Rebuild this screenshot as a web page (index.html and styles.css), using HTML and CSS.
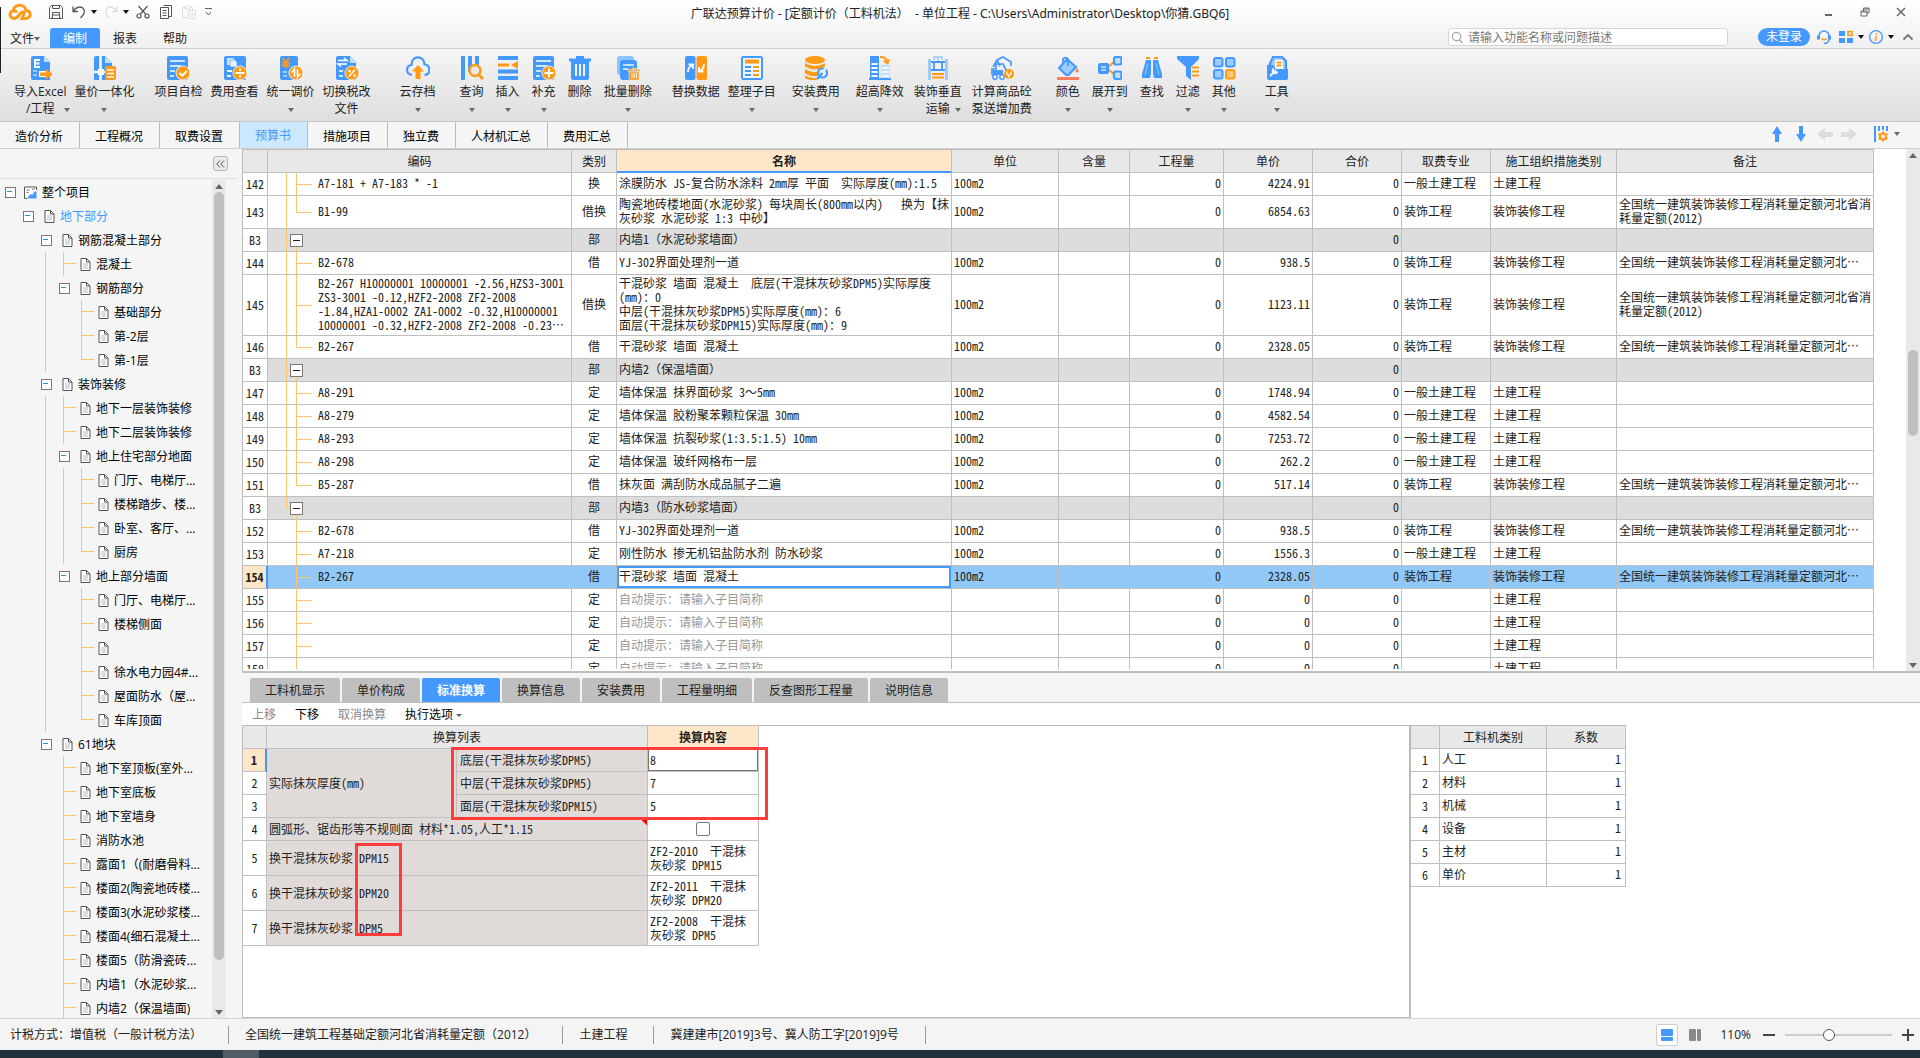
FILE: index.html
```html
<!DOCTYPE html>
<html lang="zh-CN">
<head>
<meta charset="utf-8">
<title>广联达预算计价</title>
<link rel="stylesheet" href="styles.css">
</head>
<body>
<svg class="defs" aria-hidden="true">
  <symbol id="doc" viewBox="0 0 11 13"><path d="M1 .5h5.500L10 4v8.500H1z" fill="#fff" stroke="#555"/><path d="M6.500.5V4H10" fill="none" stroke="#555"/><path d="M3 6h5M3 8h5M3 10h5" stroke="#bbb"/></symbol>
</svg>
<div class="app">
<header class="top">
  <div class="titlebar">
    <div class="quick">
      <svg class="logo" viewBox="0 0 24 18"><path d="M8 8.500C6 7 3 8 2.200 10.500 1.500 13 3.500 15.500 6.500 15.500 9.500 15.500 11 11 13.500 9.500 15 8.600 16.500 9.500 16 11L14 15.500H17.500C21 15.500 23 12.500 21.800 9.800 21 8 19.500 7.500 18 7.500 17.500 4 14.500 1.800 11 2.200 7.500 2.600 5.500 5 5.500 7.500" fill="none" stroke="#ff9a16" stroke-width="3" stroke-linecap="round"/></svg>
      <button aria-label="保存"><svg viewBox="0 0 14 14"><path d="M.5 2.500l2-2h9l2 2v11H.5zM3.500.5v3h7v-3M3.500 13V7.500h7V13M3.500 10h7" fill="none" stroke="#555"/></svg></button>
      <button aria-label="撤销"><svg viewBox="0 0 14 14"><path d="M1 1.500v5h5M1.500 6C4 1.500 10 .5 12 4.500c1.500 3.500-1 6-3.500 8.500" fill="none" stroke="#555" stroke-width="1.300"/></svg></button>
      <i class="caret"></i>
      <button aria-label="恢复"><svg viewBox="0 0 14 14"><path d="M13 1.500v5H8M12.500 6C10 1.500 4 .5 2 4.500c-1.500 3.500 1 6 3.500 8.500" fill="none" stroke="#ddd" stroke-width="1.300"/></svg></button>
      <i class="caret"></i>
      <button aria-label="剪切"><svg viewBox="0 0 14 14"><g fill="none" stroke="#555" stroke-width="1.200"><path d="M2.500 1l7.500 8.500M11.500 1L4 9.500"/><circle cx="3" cy="11" r="2"/><circle cx="11" cy="11" r="2"/></g></svg></button>
      <button aria-label="复制"><svg viewBox="0 0 14 14"><path d="M4.500.5h8v11h-3M1.500 2.500h8v11h-8zM3.500 5.500h4M3.500 8h4M3.500 10.500h4" fill="none" stroke="#555"/></svg></button>
      <button aria-label="粘贴"><svg viewBox="0 0 14 14"><path d="M5 12.500H.5v-10H3M8 2.500h2.500V5M3 1h5v3H3zM6.500 5.500h7v8h-7zM8 8.500h4M8 11h4" fill="none" stroke="#ddd"/></svg></button>
      <svg class="more" viewBox="0 0 8 9"><path d="M0 .5h7M1 4l2.500 3L6 4" fill="none" stroke="#666"/></svg>
    </div>
    <h1>广联达预算计价 - [定额计价（工料机法）  - 单位工程 - C:\Users\Administrator\Desktop\你猜.GBQ6]</h1>
    <div class="winbtns">
      <button aria-label="最小化"><svg viewBox="0 0 10 10"><path d="M1 8h7" stroke="#666" stroke-width="2"/></svg></button>
      <button aria-label="还原"><svg viewBox="0 0 10 10"><path d="M1 4h6v5H1zM1 5h6M3.500 4V1H9v5H7M3.500 2H9" fill="none" stroke="#666"/></svg></button>
      <button aria-label="关闭"><svg viewBox="0 0 10 10"><path d="M1 1l8 8M9 1L1 9" stroke="#666" stroke-width="1.500"/></svg></button>
    </div>
  </div>
  <div class="menubar">
    <nav class="menus"><button class="file">文件<i class="caret grey"></i></button><button class="on">编制</button><button>报表</button><button>帮助</button></nav>
    <div class="account">
      <label class="search"><svg viewBox="0 0 14 14"><circle cx="6" cy="6" r="4.500" fill="none" stroke="#aaa" stroke-width="1.400"/><path d="M9 9.500l3.500 3.500" stroke="#aaa" stroke-width="1.600"/></svg><input type="text" placeholder="请输入功能名称或问题描述" aria-label="搜索"></label>
      <button class="login">未登录</button>
      <svg class="a16" viewBox="0 0 16 16"><path d="M3 9V7a5 5 0 0 1 10 0v3c0 2.500-2 4.500-5 4.500" fill="none" stroke="#49f" stroke-width="1.600"/><path d="M2.500 6.500v4M13.500 6.500v4" stroke="#49f" stroke-width="3"/><path d="M5.500 9.500q2.500 2.500 5 0" stroke="#ff9a16" stroke-width="1.600" fill="none"/></svg>
      <svg class="a16" viewBox="0 0 16 16"><path d="M1 2h6v5H1zM1 9h6v5H1zM9 9h6v5H9z" fill="#49f"/><path d="M10 2.500h4v4h-4z" fill="none" stroke="#ff9a16" stroke-width="1.600"/></svg>
      <i class="caret"></i>
      <svg class="a16" viewBox="0 0 16 16"><circle cx="8" cy="8" r="6.400" fill="none" stroke="#49f" stroke-width="1.300"/><path d="M8.800 4.200l-.3 1.500M8.200 7L7.300 12" stroke="#ff9a16" stroke-width="1.600"/></svg>
      <i class="caret"></i>
      <svg class="a12" viewBox="0 0 12 12"><path d="M1.500 8.500L6 4l4.500 4.500" fill="none" stroke="#777" stroke-width="1.800"/></svg>
    </div>
  </div>
</header>

<div class="ribbon">
  <div class="group">
    <button><svg viewBox="0 0 24 24"><path d="M3 2a2 2 0 0 1 2-2h11l6 6v18H5a2 2 0 0 1-2-2z" fill="#49f"/><path d="M16 0l6 6h-6z" fill="#bfe0ff"/><path d="M12 4H7v7h5M7 7.500h4.500" stroke="#fff" stroke-width="2" fill="none"/><path d="M5 15h4M5 19h4" stroke="#9cf" stroke-width="2"/><path d="M11 18h7" stroke="#fff" stroke-width="6"/><path d="M12 16.500h6V13l7 5.300-7 5.300V20h-6z" fill="#ff9a16"/></svg><span>导入Excel<br>/工程<i class="caret grey gap"></i></span></button>
    <button><svg viewBox="0 0 24 24"><path d="M2 2a2 2 0 0 1 2-2h9l7 7v17H2z" fill="#49f"/><path d="M13 0l7 7h-7z" fill="#bfe0ff"/><path d="M8.500 0v24M2 16h12" stroke="#fff" stroke-width="2.500"/><path d="M6 13h6v6H6z" fill="#fff"/><rect x="13" y="10" width="11" height="14" rx="2" fill="#ff9a16"/><path d="M15 14h7M15 17.500h7M15 21h7" stroke="#fff" stroke-width="1.500"/></svg><span>量价一体化<br><i class="caret grey"></i></span></button>
  </div>
  <div class="group sm">
    <button><svg viewBox="0 0 24 24"><rect x="1" width="21" height="24" rx="2" fill="#49f"/><path d="M4 5h15M4 10h11M4 15h5M4 20h4" stroke="#cfe6ff" stroke-width="2"/><circle cx="17" cy="17" r="7" fill="#ff9a16" stroke="#eee"/><path d="M13.500 17l2.700 2.700 4.600-4.600" stroke="#fff" stroke-width="2" fill="none"/></svg><span>项目自检</span></button>
    <button><svg viewBox="0 0 24 24"><rect x="1" width="22" height="24" rx="2" fill="#49f"/><path d="M4 2h6l2 2v5H4z" fill="#cfe6ff"/><path d="M7 4h5l2 2v5H7z" fill="#e8f3ff" stroke="#49f" stroke-width=".6"/><path d="M4 15h5M4 20h4" stroke="#fff" stroke-width="2"/><circle cx="17" cy="17" r="7" fill="#ff9a16" stroke="#eee"/><path d="M12.500 17h9M17 12.500v2.500M17 19v2.500" stroke="#fff" stroke-width="2"/></svg><span>费用查看</span></button>
    <button><svg viewBox="0 0 24 24"><rect x="1" width="18" height="24" rx="2" fill="#49f"/><path d="M3.500 2l3.500 4 3.500-4M7 6v6M3 6.500h8M3 9.500h8" stroke="#ff9a16" stroke-width="1.800" fill="none"/><path d="M4 16h4M4 20h4" stroke="#9cf" stroke-width="2"/><circle cx="17" cy="17" r="7" fill="#ff9a16" stroke="#eee"/><path d="M15.500 21v-8l-3 3.500M18.500 13v8l3-3.500" stroke="#fff" stroke-width="1.600" fill="none"/></svg><span>统一调价<br><i class="caret grey"></i></span></button>
    <button><svg viewBox="0 0 24 24"><path d="M1 2a2 2 0 0 1 2-2h12l6 6v18H3a2 2 0 0 1-2-2z" fill="#49f"/><path d="M15 0l7 7h-7z" fill="#bfe0ff"/><path d="M3 4.500h9L9 2M12 8H3l3 2.500" stroke="#fff" stroke-width="1.600" fill="none"/><path d="M4 15h4M4 20h4" stroke="#cfe6ff" stroke-width="2"/><circle cx="17" cy="17" r="7" fill="#ff9a16" stroke="#eee"/><path d="M20 13.500l-6 7" stroke="#fff" stroke-width="1.500"/><circle cx="14.500" cy="15" r="1.300" fill="#fff"/><circle cx="19.500" cy="19.500" r="1.300" fill="#fff"/></svg><span>切换税改<br>文件</span></button>
  </div>
  <div class="group lg">
    <button><svg viewBox="0 0 24 24"><path d="M6 19C-1 18 0 9.500 5.500 9 5.500-1 18-1 18.500 8.500c6 .5 7 9.500 0 10.500" fill="none" stroke="#49f" stroke-width="2.200"/><path d="M12 9l6 6.500h-3.500V23h-5v-7.500H6z" fill="#ff9a16"/></svg><span>云存档<br><i class="caret grey"></i></span></button>
  </div>
  <div class="group md">
    <button><svg viewBox="0 0 24 24"><path d="M1 0h4v24H1zM8 0h4v16H8zM15 0h4v9h-4z" fill="#49f"/><circle cx="15" cy="14.500" r="5.500" fill="#e9e9e9" stroke="#ff9a16" stroke-width="2.400"/><path d="M19 19l4 4" stroke="#ff9a16" stroke-width="2.800"/></svg><span>查询<br><i class="caret grey"></i></span></button>
    <button><svg viewBox="0 0 24 24"><path d="M2 2h20M2 15.500h20M2 22h20" stroke="#49f" stroke-width="4"/><path d="M2 9h11" stroke="#ff9a16" stroke-width="3"/><path d="M22 5v8l-7-4z" fill="#ff9a16"/></svg><span>插入<br><i class="caret grey"></i></span></button>
    <button><svg viewBox="0 0 24 24"><rect x="1" width="21" height="24" rx="2" fill="#49f"/><path d="M4 5h15M4 10h11M4 15h5M4 20h4" stroke="#cfe6ff" stroke-width="2"/><circle cx="17" cy="17" r="7" fill="#ff9a16" stroke="#eee"/><path d="M12.500 17h9M17 12.500v9" stroke="#fff" stroke-width="2"/></svg><span>补充<br><i class="caret grey"></i></span></button>
    <button><svg viewBox="0 0 24 24"><path d="M1 2.500h22v3H1zM8 0h8v3H8zM3 5h18v17a2 2 0 0 1-2 2H5a2 2 0 0 1-2-2z" fill="#49f"/><path d="M8 8v12M12 8v12M16 8v12" stroke="#fff" stroke-width="1.800"/></svg><span>删除</span></button>
    <button><svg viewBox="0 0 24 24"><rect x="1" width="17" height="19" rx="3" fill="#8cc4ff"/><rect x="4" y="4" width="17" height="20" rx="3" fill="#49f"/><path d="M7 9h11M7 13h5" stroke="#bfe0ff" stroke-width="2"/><path d="M12 13.500h12v2H12zM16 12h4v2h-4zM13 16h10v8H13z" fill="#ff9a16" stroke="#eee" stroke-width=".5"/><path d="M16 17v5M18.200 17v5M20.400 17v5" stroke="#fff"/></svg><span>批量删除<br><i class="caret grey"></i></span></button>
  </div>
  <div class="group sm">
    <button><svg viewBox="0 0 24 24"><rect x="1" width="10.500" height="24" rx="2" fill="#49f"/><rect x="12.500" width="10.500" height="24" rx="2" fill="#ff9a16"/><path d="M4 16q0-5 4-6.500M4.500 8.500h4.500v4.500M20 8q0 5-4 6.500M19.500 15.500H15V11" stroke="#fff" stroke-width="1.800" fill="none"/></svg><span>替换数据</span></button>
    <button><svg viewBox="0 0 24 24"><rect x="2" y="1" width="20" height="22" rx="1.500" fill="#eef6ff" stroke="#49f" stroke-width="2"/><path d="M5 5.500h14" stroke="#ff9a16" stroke-width="4"/><path d="M5 11h6M5 15h6M5 19h6" stroke="#49f" stroke-width="1.800"/><path d="M13 11h6M13 15h6M13 19h6" stroke="#ff9a16" stroke-width="1.800"/></svg><span>整理子目<br><i class="caret grey"></i></span></button>
  </div>
  <div class="group xs">
    <button><svg viewBox="0 0 24 24"><ellipse cx="11" cy="4" rx="10" ry="4" fill="#ff9a16"/><path d="M1 7q10 6 20 0v3.500q-10 6-20 0zM1 13q8 5 14 2l-2 5q-6 1-12-2.500zM1 19.500q6 3 11 2.500l1 2q-7 1-12-2z" fill="#ff9a16"/><circle cx="18.500" cy="17" r="4.500" fill="#e6f2ff" stroke="#49f" stroke-width="2.200"/><path d="M18.500 17L13 23" stroke="#49f" stroke-width="2.500"/><path d="M18.500 16.500l3-4" stroke="#eee" stroke-width="2.500"/></svg><span>安装费用<br><i class="caret grey"></i></span></button>
  </div>
  <div class="group xs">
    <button><svg viewBox="0 0 24 24"><path d="M2 0h9v22H2zM1 22h22v2H1z" fill="#49f"/><path d="M3.500 8h6M3.500 12h6M3.500 16h6M3.500 20h6" stroke="#fff" stroke-width="1.800"/><path d="M13 9h9v13h-9z" fill="#bfe0ff"/><path d="M14 12h7M14 16h7M14 20h7" stroke="#fff" stroke-width="1.600"/><path d="M12 1q6 0 7 4" stroke="#ff9a16" stroke-width="2.200" fill="none"/><path d="M14.500 5l7.500-2-2 6z" fill="#ff9a16"/></svg><span>超高降效<br><i class="caret grey"></i></span></button>
    <button><svg viewBox="0 0 24 24"><path d="M2 3h3v21H2zM19 3h3v21h-3z" fill="#9bcbff"/><path d="M5 6h14M5 14h14M8 7v7M16 7v7" stroke="#49f" stroke-width="1.800"/><path d="M8 4V1h8v3M12 1v4" stroke="#9bcbff" fill="none" stroke-width="1.500"/><path d="M6 18h12M6 21.500h12" stroke="#ff9a16" stroke-width="2.200"/></svg><span>装饰垂直<br>运输<i class="caret grey near"></i></span></button>
    <button><svg viewBox="0 0 24 24"><path d="M3 11l4-7 6-3 8 5v4M7 4l3 6M2 19v-6h4V8h7l3 6v3" fill="none" stroke="#49f" stroke-width="1.700"/><path d="M3 14h10v5H2z" fill="#49f"/><circle cx="5" cy="21" r="2.200" fill="#fff" stroke="#49f" stroke-width="1.500"/><circle cx="12" cy="21" r="2.200" fill="#fff" stroke="#49f" stroke-width="1.500"/><circle cx="19" cy="18" r="5" fill="#ff9a16"/><path d="M17 15.500v2.500l2 1.500 2-1.500v-2.500M19 19v3" stroke="#fff" stroke-width="1.200" fill="none"/></svg><span>计算商品砼<br>泵送增加费</span></button>
  </div>
  <div class="group md">
    <button><svg viewBox="0 0 24 24"><path d="M11 3l9 8-7.500 8H10l-7-7z" fill="#9bcbff" stroke="#49f" stroke-width="2"/><path d="M7 8V3a3 3 0 0 1 5 0v7" fill="none" stroke="#49f" stroke-width="1.800"/><path d="M21 12q3 4 0 4.500-3-.5 0-4.500z" fill="#f97c5d"/><path d="M1 22.500h22" stroke="#f97c5d" stroke-width="3"/></svg><span>颜色<br><i class="caret grey"></i></span></button>
    <button><svg viewBox="0 0 24 24"><path d="M10 11l7-6M10 13l7 6" stroke="#ff9a16" stroke-width="1.800"/><rect x="0" y="7" width="11" height="11" rx="2" fill="#49f"/><path d="M3 11h5M3 14h5" stroke="#cfe6ff" stroke-width="1.500"/><rect x="16" y="1" width="7.500" height="7.500" rx="2" fill="#bfe0ff" stroke="#49f" stroke-width="2.200"/><rect x="16" y="15.500" width="7.500" height="7.500" rx="2" fill="#bfe0ff" stroke="#49f" stroke-width="2.200"/></svg><span>展开到<br><i class="caret grey"></i></span></button>
    <button><svg viewBox="0 0 24 24"><path d="M6 4h5v13l-1 5H2V18zM13 4h5l4 14v4h-8l-1-5z" fill="#49f"/><path d="M6 2h4M14 2h4" stroke="#ff9a16" stroke-width="2"/><path d="M8 7L5 19M16 7l3 12" stroke="#9bcbff"/></svg><span>查找</span></button>
    <button><svg viewBox="0 0 24 24"><path d="M1 0h22v3l-8 8v13l-5-4v-9L1 3z" fill="#49f"/><path d="M16 11.500h7M16 15.500h7M16 19.500h7" stroke="#ff9a16" stroke-width="2"/></svg><span>过滤<br><i class="caret grey"></i></span></button>
    <button><svg viewBox="0 0 24 24"><g fill="#9bcbff" stroke="#49f" stroke-width="2"><rect x="2" y="2" width="8.500" height="8.500" rx="2"/><rect x="14" y="2" width="8.500" height="8.500" rx="2"/><rect x="2" y="14" width="8.500" height="8.500" rx="2"/><rect x="14" y="14" width="8.500" height="8.500" rx="2" fill="#ffc77a" stroke="#ff9a16"/></g></svg><span>其他<br><i class="caret grey"></i></span></button>
  </div>
  <div class="group lg">
    <button><svg viewBox="0 0 24 24"><path d="M4 10l4-9h9l4 4v8" fill="#9bcbff" stroke="#49f" stroke-width="2.200"/><path d="M10 4h8v10h-8z" fill="#fff"/><path d="M11.500 6.500h5M11.500 9.500h5" stroke="#ff9a16" stroke-width="1.800"/><path d="M2 9h6l3 4h12v9a2 2 0 0 1-2 2H4a2 2 0 0 1-2-2z" fill="#49f"/><path d="M5 20l6-6M9 12.500a2.500 2.500 0 1 0 3.500 3" stroke="#fff" stroke-width="1.800" fill="none"/></svg><span>工具<br><i class="caret grey"></i></span></button>
  </div>
</div>

<div class="pages">
  <nav><button>造价分析</button><button>工程概况</button><button>取费设置</button><button class="on">预算书</button><button>措施项目</button><button>独立费</button><button>人材机汇总</button><button>费用汇总</button></nav>
  <div class="moves">
    <svg viewBox="0 0 16 16"><path d="M8 0l5 8h-3v8H6V8H3z" fill="#49f"/></svg>
    <svg viewBox="0 0 16 16"><path d="M8 16l5-8h-3V0H6v8H3z" fill="#49f"/></svg>
    <svg viewBox="0 0 16 16"><path d="M0 8l8-6v4h8v5H8v4z" fill="#ddd"/></svg>
    <svg viewBox="0 0 16 16"><path d="M16 8L8 2v4H0v5h8v4z" fill="#ddd"/></svg>
    <svg class="cols" viewBox="0 0 16 16"><path d="M1 0h2v16H1zM5 0h2v5H5zM9 0h2v4H9zM13 0h2v5h-2z" fill="#49f"/><circle cx="10" cy="10.500" r="3" fill="none" stroke="#ff9a16" stroke-width="2.200"/><path d="M10 5.500v2M10 13.500v2M5.500 8l2 1M12.500 12l2 1M5.500 13l2-1M12.500 9l2-1" stroke="#ff9a16" stroke-width="2"/></svg>
    <i class="caret grey"></i>
  </div>
</div>

<div class="body">
<aside class="side">
  <div class="sidehead"><button aria-label="收起"><svg viewBox="0 0 9 8"><path d="M4 .5L.8 4 4 7.500M8 .5L4.800 4 8 7.500" fill="none" stroke="#555"/></svg></button></div>
  <div class="treebox">
    <ul class="tree">
      <li><i class="tg"></i><svg class="root" viewBox="0 0 13 13"><path d="M12.500 4V1H.5v11.500H3" fill="#fff" stroke="#555"/><path d="M3 12.500V9l3-1 2-3h4.500v7.500z" fill="#fff"/><path d="M3 12.500l3-4h3l1-3h2.500v7z" fill="#49f"/><path d="M2.500 4h3M2.500 6.500h2M8 3.500l3-1" stroke="#777"/></svg>整个项目</li>
      <li class="cur"><i></i><i class="tg"></i><svg><use href="#doc"/></svg>地下部分</li>
      <li><i></i><i></i><i class="tg"></i><svg><use href="#doc"/></svg>钢筋混凝土部分</li>
      <li><i></i><i></i><i class="v"></i><i class="v h"></i><svg><use href="#doc"/></svg>混凝土</li>
      <li><i></i><i></i><i class="v"></i><i class="tg"></i><svg><use href="#doc"/></svg>钢筋部分</li>
      <li><i></i><i></i><i class="v"></i><i></i><i class="v h"></i><svg><use href="#doc"/></svg>基础部分</li>
      <li><i></i><i></i><i class="v"></i><i></i><i class="v h"></i><svg><use href="#doc"/></svg>第-2层</li>
      <li><i></i><i></i><i class="v"></i><i></i><i class="e h"></i><svg><use href="#doc"/></svg>第-1层</li>
      <li><i></i><i></i><i class="tg"></i><svg><use href="#doc"/></svg>装饰装修</li>
      <li><i></i><i></i><i class="v"></i><i class="v h"></i><svg><use href="#doc"/></svg>地下一层装饰装修</li>
      <li><i></i><i></i><i class="v"></i><i class="v h"></i><svg><use href="#doc"/></svg>地下二层装饰装修</li>
      <li><i></i><i></i><i class="v"></i><i class="tg"></i><svg><use href="#doc"/></svg>地上住宅部分地面</li>
      <li><i></i><i></i><i class="v"></i><i class="v"></i><i class="v h"></i><svg><use href="#doc"/></svg>门厅、电梯厅...</li>
      <li><i></i><i></i><i class="v"></i><i class="v"></i><i class="v h"></i><svg><use href="#doc"/></svg>楼梯踏步、楼...</li>
      <li><i></i><i></i><i class="v"></i><i class="v"></i><i class="v h"></i><svg><use href="#doc"/></svg>卧室、客厅、...</li>
      <li><i></i><i></i><i class="v"></i><i class="v"></i><i class="e h"></i><svg><use href="#doc"/></svg>厨房</li>
      <li><i></i><i></i><i class="v"></i><i class="tg"></i><svg><use href="#doc"/></svg>地上部分墙面</li>
      <li><i></i><i></i><i class="v"></i><i></i><i class="v h"></i><svg><use href="#doc"/></svg>门厅、电梯厅...</li>
      <li><i></i><i></i><i class="v"></i><i></i><i class="v h"></i><svg><use href="#doc"/></svg>楼梯侧面</li>
      <li><i></i><i></i><i class="v"></i><i></i><i class="v h"></i><svg><use href="#doc"/></svg></li>
      <li><i></i><i></i><i class="v"></i><i></i><i class="v h"></i><svg><use href="#doc"/></svg>徐水电力园4#...</li>
      <li><i></i><i></i><i class="v"></i><i></i><i class="v h"></i><svg><use href="#doc"/></svg>屋面防水（屋...</li>
      <li><i></i><i></i><i class="v"></i><i></i><i class="e h"></i><svg><use href="#doc"/></svg>车库顶面</li>
      <li><i></i><i></i><i class="tg"></i><svg><use href="#doc"/></svg>61地块</li>
      <li><i></i><i></i><i></i><i class="v h"></i><svg><use href="#doc"/></svg>地下室顶板(室外...</li>
      <li><i></i><i></i><i></i><i class="v h"></i><svg><use href="#doc"/></svg>地下室底板</li>
      <li><i></i><i></i><i></i><i class="v h"></i><svg><use href="#doc"/></svg>地下室墙身</li>
      <li><i></i><i></i><i></i><i class="v h"></i><svg><use href="#doc"/></svg>消防水池</li>
      <li><i></i><i></i><i></i><i class="v h"></i><svg><use href="#doc"/></svg>露面1（(耐磨骨料...</li>
      <li><i></i><i></i><i></i><i class="v h"></i><svg><use href="#doc"/></svg>楼面2(陶瓷地砖楼...</li>
      <li><i></i><i></i><i></i><i class="v h"></i><svg><use href="#doc"/></svg>楼面3(水泥砂浆楼...</li>
      <li><i></i><i></i><i></i><i class="v h"></i><svg><use href="#doc"/></svg>楼面4(细石混凝土...</li>
      <li><i></i><i></i><i></i><i class="v h"></i><svg><use href="#doc"/></svg>楼面5（防滑瓷砖...</li>
      <li><i></i><i></i><i></i><i class="v h"></i><svg><use href="#doc"/></svg>内墙1（水泥砂浆...</li>
      <li><i></i><i></i><i></i><i class="v h"></i><svg><use href="#doc"/></svg>内墙2（保温墙面)</li>
    </ul>
    <div class="vbar"><i class="up"></i><div class="track side-track"><b></b></div><i class="down"></i></div>
  </div>
</aside>

<main class="work">
<section class="upper">
  <div class="gridbox">
  <table class="grid main">
    <colgroup><col class="w-no"><col class="w-code"><col class="w-kind"><col class="w-name"><col class="w-unit"><col class="w-cont"><col class="w-qty"><col class="w-price"><col class="w-price"><col class="w-price"><col class="w-cat"><col class="w-note"></colgroup>
    <thead><tr><th></th><th>编码</th><th>类别</th><th class="hot">名称</th><th>单位</th><th>含量</th><th>工程量</th><th>单价</th><th>合价</th><th>取费专业</th><th>施工组织措施类别</th><th>备注</th></tr></thead>
    <tbody>
      <tr><th>142</th><td class="code o t">A7-181 + A7-183 * -1</td><td class="c">换</td><td>涂膜防水 JS-复合防水涂料 2mm厚 平面  实际厚度(mm):1.5</td><td>100m2</td><td></td><td class="r">0</td><td class="r">4224.91</td><td class="r">0</td><td>一般土建工程</td><td>土建工程</td><td></td></tr>
      <tr><th>143</th><td class="code o l">B1-99</td><td class="c">借换</td><td>陶瓷地砖楼地面(水泥砂浆) 每块周长(800mm以内)   换为【抹<br>灰砂浆 水泥砂浆 1:3 中砂】</td><td>100m2</td><td></td><td class="r">0</td><td class="r">6854.63</td><td class="r">0</td><td>装饰工程</td><td>装饰装修工程</td><td>全国统一建筑装饰装修工程消耗量定额河北省消<br>耗量定额(2012)</td></tr>
      <tr class="sec"><th>B3</th><td class="code o s"><button class="fold" aria-label="折叠"></button></td><td class="c">部</td><td>内墙1<span class="fw">（水泥砂浆墙面）</span></td><td></td><td></td><td></td><td></td><td class="r">0</td><td></td><td></td><td></td></tr>
      <tr><th>144</th><td class="code o t">B2-678</td><td class="c">借</td><td>YJ-302界面处理剂一道</td><td>100m2</td><td></td><td class="r">0</td><td class="r">938.5</td><td class="r">0</td><td>装饰工程</td><td>装饰装修工程</td><td>全国统一建筑装饰装修工程消耗量定额河北…</td></tr>
      <tr><th>145</th><td class="code o t">B2-267 H10000001 10000001 -2.56,HZS3-3001<br>ZS3-3001 -0.12,HZF2-2008 ZF2-2008<br>-1.84,HZA1-0002 ZA1-0002 -0.32,H10000001<br>10000001 -0.32,HZF2-2008 ZF2-2008 -0.23…</td><td class="c">借换</td><td>干混砂浆 墙面 混凝土  底层(干混抹灰砂浆DPM5)实际厚度<br>(mm)：0<br>中层(干混抹灰砂浆DPM5)实际厚度(mm)：6<br>面层(干混抹灰砂浆DPM15)实际厚度(mm)：9</td><td>100m2</td><td></td><td class="r">0</td><td class="r">1123.11</td><td class="r">0</td><td>装饰工程</td><td>装饰装修工程</td><td>全国统一建筑装饰装修工程消耗量定额河北省消<br>耗量定额(2012)</td></tr>
      <tr><th>146</th><td class="code o l">B2-267</td><td class="c">借</td><td>干混砂浆 墙面 混凝土</td><td>100m2</td><td></td><td class="r">0</td><td class="r">2328.05</td><td class="r">0</td><td>装饰工程</td><td>装饰装修工程</td><td>全国统一建筑装饰装修工程消耗量定额河北…</td></tr>
      <tr class="sec"><th>B3</th><td class="code o s"><button class="fold" aria-label="折叠"></button></td><td class="c">部</td><td>内墙2<span class="fw">（保温墙面）</span></td><td></td><td></td><td></td><td></td><td class="r">0</td><td></td><td></td><td></td></tr>
      <tr><th>147</th><td class="code o t">A8-291</td><td class="c">定</td><td>墙体保温 抹界面砂浆 3<span class="fw">～</span>5mm</td><td>100m2</td><td></td><td class="r">0</td><td class="r">1748.94</td><td class="r">0</td><td>一般土建工程</td><td>土建工程</td><td></td></tr>
      <tr><th>148</th><td class="code o t">A8-279</td><td class="c">定</td><td>墙体保温 胶粉聚苯颗粒保温 30mm</td><td>100m2</td><td></td><td class="r">0</td><td class="r">4582.54</td><td class="r">0</td><td>一般土建工程</td><td>土建工程</td><td></td></tr>
      <tr><th>149</th><td class="code o t">A8-293</td><td class="c">定</td><td>墙体保温 抗裂砂浆(1:3.5:1.5) 10mm</td><td>100m2</td><td></td><td class="r">0</td><td class="r">7253.72</td><td class="r">0</td><td>一般土建工程</td><td>土建工程</td><td></td></tr>
      <tr><th>150</th><td class="code o t">A8-298</td><td class="c">定</td><td>墙体保温 玻纤网格布一层</td><td>100m2</td><td></td><td class="r">0</td><td class="r">262.2</td><td class="r">0</td><td>一般土建工程</td><td>土建工程</td><td></td></tr>
      <tr><th>151</th><td class="code o l">B5-287</td><td class="c">借</td><td>抹灰面 满刮防水成品腻子二遍</td><td>100m2</td><td></td><td class="r">0</td><td class="r">517.14</td><td class="r">0</td><td>装饰工程</td><td>装饰装修工程</td><td>全国统一建筑装饰装修工程消耗量定额河北…</td></tr>
      <tr class="sec"><th>B3</th><td class="code oe s"><button class="fold" aria-label="折叠"></button></td><td class="c">部</td><td>内墙3<span class="fw">（防水砂浆墙面）</span></td><td></td><td></td><td></td><td></td><td class="r">0</td><td></td><td></td><td></td></tr>
      <tr><th>152</th><td class="code t">B2-678</td><td class="c">借</td><td>YJ-302界面处理剂一道</td><td>100m2</td><td></td><td class="r">0</td><td class="r">938.5</td><td class="r">0</td><td>装饰工程</td><td>装饰装修工程</td><td>全国统一建筑装饰装修工程消耗量定额河北…</td></tr>
      <tr><th>153</th><td class="code t">A7-218</td><td class="c">定</td><td>刚性防水 掺无机铝盐防水剂 防水砂浆</td><td>100m2</td><td></td><td class="r">0</td><td class="r">1556.3</td><td class="r">0</td><td>一般土建工程</td><td>土建工程</td><td></td></tr>
      <tr class="sel"><th>154</th><td class="code t">B2-267</td><td class="c">借</td><td class="edit">干混砂浆 墙面 混凝土</td><td>100m2</td><td></td><td class="r">0</td><td class="r">2328.05</td><td class="r">0</td><td>装饰工程</td><td>装饰装修工程</td><td>全国统一建筑装饰装修工程消耗量定额河北…</td></tr>
      <tr><th>155</th><td class="code t"></td><td class="c">定</td><td class="hint">自动提示：请输入子目简称</td><td></td><td></td><td class="r">0</td><td class="r">0</td><td class="r">0</td><td></td><td>土建工程</td><td></td></tr>
      <tr><th>156</th><td class="code t"></td><td class="c">定</td><td class="hint">自动提示：请输入子目简称</td><td></td><td></td><td class="r">0</td><td class="r">0</td><td class="r">0</td><td></td><td>土建工程</td><td></td></tr>
      <tr><th>157</th><td class="code t"></td><td class="c">定</td><td class="hint">自动提示：请输入子目简称</td><td></td><td></td><td class="r">0</td><td class="r">0</td><td class="r">0</td><td></td><td>土建工程</td><td></td></tr>
      <tr><th>158</th><td class="code l"></td><td class="c">定</td><td class="hint">自动提示：请输入子目简称</td><td></td><td></td><td class="r">0</td><td class="r">0</td><td class="r">0</td><td></td><td>土建工程</td><td></td></tr>
    </tbody>
  </table>
  </div>
  <div class="vbar"><i class="up"></i><div class="track main-track"><b></b></div><i class="down"></i></div>
</section>

<section class="lower">
  <nav class="tabs"><button>工料机显示</button><button>单价构成</button><button class="on">标准换算</button><button>换算信息</button><button>安装费用</button><button>工程量明细</button><button>反查图形工程量</button><button>说明信息</button></nav>
  <div class="tools"><button disabled>上移</button><button>下移</button><button disabled>取消换算</button><button>执行选项<i class="caret grey"></i></button></div>
  <div class="panes">
    <div class="pane conv">
      <table class="grid">
        <colgroup><col class="w-no2"><col class="w-item"><col class="w-sub"><col class="w-val"></colgroup>
        <thead><tr><th></th><th colspan="2">换算列表</th><th class="hot2">换算内容</th></tr></thead>
        <tbody>
          <tr class="now"><th>1</th><td class="lab" rowspan="3">实际抹灰厚度(mm)</td><td class="lab sub">底层(干混抹灰砂浆DPM5)</td><td class="focus">8</td></tr>
          <tr><th>2</th><td class="lab sub">中层(干混抹灰砂浆DPM5)</td><td>7</td></tr>
          <tr><th>3</th><td class="lab sub">面层(干混抹灰砂浆DPM15)</td><td>5</td></tr>
          <tr><th>4</th><td class="lab flag" colspan="2">圆弧形、锯齿形等不规则面 材料*1.05,人工*1.15</td><td class="c"><input type="checkbox" aria-label="圆弧形、锯齿形等不规则面"></td></tr>
          <tr class="tall"><th>5</th><td class="lab" colspan="2">换干混抹灰砂浆 DPM15</td><td>ZF2-2010  干混抹<br>灰砂浆 DPM15</td></tr>
          <tr class="tall"><th>6</th><td class="lab" colspan="2">换干混抹灰砂浆 DPM20</td><td>ZF2-2011  干混抹<br>灰砂浆 DPM20</td></tr>
          <tr class="tall"><th>7</th><td class="lab" colspan="2">换干混抹灰砂浆 DPM5</td><td>ZF2-2008  干混抹<br>灰砂浆 DPM5</td></tr>
        </tbody>
      </table>
      <div class="mark one"></div>
      <div class="mark two"></div>
    </div>
    <div class="pane coef">
      <table class="grid">
        <colgroup><col class="w-no3"><col class="w-type"><col class="w-coef"></colgroup>
        <thead><tr><th></th><th>工料机类别</th><th>系数</th></tr></thead>
        <tbody>
          <tr><th>1</th><td>人工</td><td class="r">1</td></tr>
          <tr><th>2</th><td>材料</td><td class="r">1</td></tr>
          <tr><th>3</th><td>机械</td><td class="r">1</td></tr>
          <tr><th>4</th><td>设备</td><td class="r">1</td></tr>
          <tr><th>5</th><td>主材</td><td class="r">1</td></tr>
          <tr><th>6</th><td>单价</td><td class="r">1</td></tr>
        </tbody>
      </table>
    </div>
  </div>
</section>
</main>
</div>

<footer class="status">
  <span class="tax">计税方式：增值税（一般计税方法）</span><span class="quota">全国统一建筑工程基础定额河北省消耗量定额（2012）</span><span class="prof">土建工程</span><span class="rule">冀建建市[2019]3号、冀人防工字[2019]9号</span>
  <div class="zoom">
    <button class="view on" aria-label="上下布局"><svg viewBox="0 0 12 12"><rect width="12" height="7" rx="1" fill="#49f"/><rect y="8" width="12" height="4" rx="1" fill="#49f"/></svg></button>
    <button class="view" aria-label="左右布局"><svg viewBox="0 0 12 12"><rect width="7" height="12" rx="1" fill="#888"/><rect x="8" width="4" height="12" rx="1" fill="#888"/></svg></button>
    <output>110%</output>
    <button class="step" aria-label="缩小"><svg viewBox="0 0 12 12"><path d="M0 6h12" stroke="#444" stroke-width="2"/></svg></button>
    <input type="range" min="0" max="100" value="40" aria-label="缩放">
    <button class="step" aria-label="放大"><svg viewBox="0 0 12 12"><path d="M0 6h12M6 0v12" stroke="#444" stroke-width="2"/></svg></button>
  </div>
</footer>
<div class="taskbar"><i></i></div>
</div>
</body>
</html>
```
FILE: styles.css
```css
* { box-sizing: border-box; }
body { margin: 0; font: 12px/17px "Open Sans", "Noto Sans CJK SC", sans-serif; color: #222; background: #f4f4f4; }
button { font: inherit; color: inherit; background: none; border: 0; padding: 0; margin: 0; }
svg { display: block; flex: none; }
.defs { position: absolute; width: 0; height: 0; }
.app { display: flex; flex-direction: column; height: 100vh; overflow: hidden; }

.caret { display: inline-block; flex: none; width: 0; height: 0; border: 3px solid transparent; border-top: 4px solid #111; border-bottom: 0; vertical-align: middle; }
.caret.grey { border-top-color: #666; }
.caret.gap { margin-left: 10px; margin-right: -16px; }
.caret.near { margin-left: 5px; margin-right: -11px; }

/* title bar and menus */
.top { background: linear-gradient(#fff, #f0f0f0); border-bottom: 1px solid #cfcfcf; position: relative; }
.top::before { content: ""; position: absolute; left: 0; top: 7px; width: 1px; height: 66px; background: #222; z-index: 1; }
.titlebar { display: grid; grid-template-columns: 1fr auto 1fr; height: 28px; }
.quick { display: flex; align-items: center; gap: 9px; padding: 0 0 4px 8px; }
.quick button svg { width: 14px; height: 14px; }
.quick .caret { margin: 0 -2px 0 -4px; }
.quick .more { width: 8px; height: 9px; }
.logo { width: 24px; height: 18px; margin-right: 8px; }
h1 { margin: 0; padding-top: 5px; font: 400 12px/17px "Noto Sans", "Noto Sans CJK SC", sans-serif; white-space: pre; }
.winbtns { display: flex; justify-content: flex-end; gap: 26px; padding: 7px 14px 0 0; align-items: flex-start; }
.winbtns svg { width: 10px; height: 10px; }
.menubar { display: flex; justify-content: space-between; height: 20px; }
.menus { display: flex; }
.menus button { width: 50px; border-radius: 3px 3px 0 0; }
.menus .on { background: #49f; color: #fff; }
.account { display: flex; align-items: center; height: 18px; gap: 6px; padding-right: 6px; }
.search { display: flex; align-items: center; width: 280px; height: 18px; background: #fff; border: 1px solid #d5d5d5; border-radius: 3px; padding: 0 2px; gap: 4px; margin-right: 24px; }
.search svg { width: 13px; height: 13px; }
.search input { flex: 1; min-width: 0; border: 0; outline: 0; padding: 0; font: inherit; background: none; }
.search input::placeholder { color: #777; }
.login { width: 52px; height: 18px; border-radius: 9px; background: #49f; color: #fff; line-height: 16px; }
.a16 { width: 16px; height: 16px; }
.account .caret { margin: 0 -2px; }
.a12 { width: 12px; height: 12px; margin-left: 4px; }

/* ribbon */
.ribbon { display: flex; height: 73px; padding: 7px 0 0 14px; background: linear-gradient(#f5f5f5, #dedede); border-bottom: 1px solid #c8c8c8; }
.group { display: flex; gap: 8px; align-items: flex-start; }
.group.xs { margin-left: 16px; gap: 10px; }
.group.sm { margin-left: 20px; }
.group.md { margin-left: 24px; gap: 12px; }
.group.lg { margin-left: 29px; }
.group button { display: flex; flex-direction: column; align-items: center; gap: 3px; white-space: nowrap; }
.group svg { width: 24px; height: 24px; margin: 0 -2px; }

/* page tabs */
.pages { display: flex; justify-content: space-between; height: 27px; background: #f5f5f5; border-bottom: 1px solid #d0d0d0; }
.pages nav { display: flex; }
.pages nav button { padding: 2px 16px 0 15px; border-right: 1px solid #bbb; color: #000; }
.pages nav .on { background: #cce8ff; color: #49f; padding-top: 0; }
.moves { display: flex; align-items: center; gap: 8px; padding: 0 20px 2px 0; }
.moves svg { width: 16px; height: 16px; }
.moves .cols { margin-left: 8px; }
.moves .caret { margin-left: -3px; }

/* project tree */
.body { display: flex; flex: 1; min-height: 0; }
.side { display: flex; flex-direction: column; width: 242px; flex: none; padding-right: 4px; background: #f5f5f5; color: #000; }
.sidehead { height: 30px; border-bottom: 1px solid #dcdcdc; display: flex; justify-content: flex-end; padding: 7px 10px 0 0; }
.sidehead button { display: flex; align-items: center; justify-content: center; width: 15px; height: 15px; border: 1px solid #b5b5b5; border-radius: 3px; background: #eaeaea; }
.sidehead svg { width: 9px; height: 8px; }
.treebox { display: flex; flex: 1; min-height: 0; padding: 1px 12px 0 0; }
.tree { list-style: none; margin: 0; padding: 0; flex: 1; overflow: hidden; }
.tree li { display: flex; align-items: center; height: 24px; white-space: nowrap; }
.tree li svg { width: 11px; height: 13px; margin-right: 5px; }
.tree li .root { width: 13px; height: 13px; margin: 0 5px 0 -2px; }
.tree i { width: 18px; height: 24px; flex: none; background: no-repeat; }
.tree .v { background-image: linear-gradient(#ffc56e, #ffc56e); background-position: 9px 0; background-size: 1px 100%; }
.tree .h, .tree .tg { width: 26px; }
.tree .h { background-image: linear-gradient(#ffc56e, #ffc56e), linear-gradient(#ffc56e, #ffc56e); background-position: 9px 0, 9px 11px; background-size: 1px 100%, 13px 1px; }
.tree .e { background-size: 1px 12px, 13px 1px; }
.tree .tg::before { content: ""; display: block; width: 9px; height: 9px; margin: 7px 0 0 5px; border: 1px solid #777; background: linear-gradient(#2a8fd0, #2a8fd0) 1px 3px / 5px 1px no-repeat #fff; }
.tree .cur { color: #49f; }

.vbar { width: 14px; flex: none; background: #e9e9e9; display: flex; flex-direction: column; align-items: center; padding: 4px 0 3px; }
.vbar .up, .vbar .down { border: 4px solid transparent; border-bottom: 5px solid #666675; border-top: 0; }
.vbar .down { border-bottom: 0; border-top: 5px solid #666675; }
.track { flex: 1; display: flex; flex-direction: column; align-items: center; }
.track b { width: 10px; border-radius: 5px; background: #bfbfbf; }
.side-track b { flex: 766; margin-top: 3px; }
.side-track::after { content: ""; flex: 50; }
.main-track::before { content: ""; flex: 191; }
.main-track b { flex: 85; }
.main-track::after { content: ""; flex: 226; }

/* work area */
.work { flex: 1; min-width: 0; display: grid; grid-template-rows: 522fr 347fr; background: #fff; }
.upper { display: flex; justify-content: space-between; min-height: 0; border-left: 1px solid #bbb; }
.gridbox { overflow: hidden; margin-bottom: 2px; }
.grid { font-family: "Noto Sans CJK SC", sans-serif; font-feature-settings: "hwid"; line-height: 14px; border-collapse: separate; border-spacing: 0; table-layout: fixed; width: 0; border-top: 1px solid #bbb; }
.grid th, .grid td { height: 23px; padding: 2px; border: solid #bfbfbf; border-width: 0 1px 1px 0; white-space: pre; overflow: hidden; text-align: left; font-weight: 400; }
.grid th { text-align: center; padding: 2px 0; }
.grid thead th { background: #e8e8e8; }
.main td, .coef td { padding: 1px 2px 3px; }
.grid .c { text-align: center; }
.grid .r { text-align: right; }
.grid .hint { color: #999; }
.fw { font-feature-settings: normal; }
.grid thead .hot { background: #ffe6c8; font-weight: 700; border-bottom: 2px solid #49f; padding-bottom: 1px; }
.w-no { width: 25px; } .w-code { width: 304px; } .w-kind { width: 45px; } .w-name { width: 335px; }
.w-unit { width: 107px; } .w-cont { width: 71px; } .w-qty { width: 94px; } .w-price { width: 89px; }
.w-cat { width: 126px; } .w-note { width: 257px; }

/* outline guides inside the code column: outer branch, then item branch */
.main .code { --g: linear-gradient(#ffc56e, #ffc56e); padding-left: 50px; background-repeat: no-repeat; }
.code.t { background-image: var(--g), var(--g); background-position: 28px 0, 28px 50%; background-size: 1px calc(100% + 1px), 16px 1px; }
.code.l { background-image: var(--g), var(--g); background-position: 28px 0, 28px 50%; background-size: 1px 50%, 16px 1px; }
.code.o.t { background-image: var(--g), var(--g), var(--g); background-position: 28px 0, 28px 50%, 18px 0; background-size: 1px 100%, 16px 1px, 1px 100%; }
.code.o.l { background-image: var(--g), var(--g), var(--g); background-position: 28px 0, 28px 50%, 18px 0; background-size: 1px 50%, 16px 1px, 1px 100%; }
.code.s { background-image: var(--g), var(--g), var(--g); background-position: 28px 100%, 18px 50%, 18px 0; background-size: 1px 50%, 5px 1px, 1px 100%; }
.code.oe { background-size: 1px 50%, 5px 1px, 1px 50%; }
.main .code.s { padding: 0 0 0 22px; }
.sec td { background-color: #ddd; }
.fold { display: block; width: 13px; height: 13px; border: 1px solid #777; background: linear-gradient(#222, #222) 2px 5px / 7px 1px no-repeat #fff; }
.sel td { background-color: #91c8f8; }
.grid .sel th { background: #ffe6c8; font-weight: 700; border-right: 2px solid #49f; }
.sel .edit { background: #fff; box-shadow: inset 0 0 0 2px #49f; }

/* detail area */
.lower { display: flex; flex-direction: column; min-height: 0; border-top: 2px solid #bfbfbf; }
.tabs { display: flex; gap: 2px; padding: 5px 0 0 8px; height: 30px; background: #f4f4f4; border-bottom: 1px solid #bfbfbf; }
.tabs button { padding: 0 15px; background: #bfbfbf; border-radius: 2px 2px 0 0; color: #222; }
.tabs .on { background: #49f; color: #fff; font-weight: 700; }
.tools { display: flex; gap: 19px; padding: 0 10px; height: 22px; align-items: center; color: #000; }
.tools button:disabled { color: #888; }
.tools .caret { margin-left: 3px; border-width: 3px 3px 0; }
.panes { display: flex; flex: 1; min-height: 0; }
.pane { position: relative; }
.conv { flex: 1168; border: 1px solid #bbb; border-width: 1px 2px 1px 1px; }
.conv .grid { border-top: 0; }
.coef { flex: 510; }
.w-no2 { width: 24px; } .w-item { width: 190px; } .w-sub { width: 191px; } .w-val { width: 111px; }
.w-no3 { width: 29px; } .w-type { width: 107px; } .w-coef { width: 79px; }
.grid .lab { background: #e0dbd9; }
.grid .sub { padding-left: 3px; }
.grid thead .hot2 { background: #ffe6c8; font-weight: 700; }
.grid .now th { background: #ffe6c8; font-weight: 700; border-right: 2px solid #49f; }
.grid .focus { box-shadow: inset 0 0 0 1px #777; }
.grid .tall td { height: 35px; }
.coef .r { padding-right: 4px; }
.grid .flag { background: linear-gradient(225deg, #e11 5px, transparent 5px) #e0dbd9; }
.grid input { appearance: none; display: block; width: 14px; height: 14px; margin: 0 auto; border: 1px solid #777; border-radius: 2px; background: #fff; }
.mark { position: absolute; border: 3px solid #ff3b3b; }
.mark.one { left: 208px; top: 21px; width: 317px; height: 73px; }
.mark.two { left: 112px; top: 117px; width: 47px; height: 93px; }

/* status bar */
.status { display: flex; align-items: center; height: 32px; padding: 0 6px 0 10px; background: #f4f4f4; border-top: 1px solid #d5d5d5; flex: none; }
.status > span { border-right: 1px solid #99a; padding-right: 26px; margin-right: 16px; line-height: 18px; white-space: nowrap; }
.zoom { margin-left: auto; display: flex; align-items: center; gap: 10px; }
.view { width: 22px; height: 22px; padding: 4px; border: 1px solid transparent; border-radius: 2px; }
.view.on { background: #fff; border-color: #d0d0d0; margin-right: -4px; }
.view svg, .step svg { width: 12px; height: 12px; }
.zoom output { margin: 0 2px 0 4px; }
.zoom input { appearance: none; width: 107px; height: 12px; margin: 0; background: linear-gradient(#ccc, #ccc) 0 5px / 100% 2px no-repeat; }
.zoom input::-webkit-slider-thumb { appearance: none; width: 12px; height: 12px; border: 1px solid #555; border-radius: 50%; background: #fff; }
.taskbar { height: 8px; background: #21303a; flex: none; padding-left: 223px; }
.taskbar i { display: block; width: 36px; height: 8px; background: #4f5b65; }
```
